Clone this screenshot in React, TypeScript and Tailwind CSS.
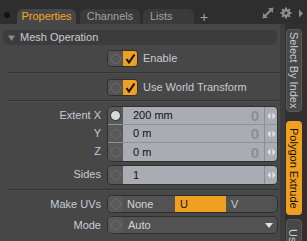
import React from "react";

const font = { fontFamily: '"Liberation Sans", Arial, sans-serif' };

function Circle({ filled }: { filled?: boolean }) {
  return (
    <div className="w-[15px] h-full flex items-center justify-center bg-[#595959]">
      <div
        className={
          filled
            ? "w-[11px] h-[11px] rounded-full bg-[#d6d8db] border border-[#2e2e2e]"
            : "w-[10px] h-[10px] rounded-full border border-[#6c6c6c]"
        }
      />
    </div>
  );
}

function Arrows() {
  return (
    <div className="w-[13px] h-full flex items-center justify-center border-l border-[#8a8e94]">
      <svg width="9" height="8" viewBox="0 0 9 8">
        <path d="M3.5 0.5 L0.5 4 L3.5 7.5 Z" fill="#e4e6e8" />
        <path d="M5.5 0.5 L8.5 4 L5.5 7.5 Z" fill="#e4e6e8" />
      </svg>
    </div>
  );
}

function Check() {
  return (
    <svg width="11" height="11" viewBox="0 0 11 11">
      <path d="M1.5 6 L4 9.5 L9.5 1.5" stroke="#111" strokeWidth="2" fill="none" />
    </svg>
  );
}

function Label({ children }: { children: React.ReactNode }) {
  return (
    <div className="w-[102px] pr-[1px] text-right text-[11px] text-[#c6ccd3] leading-none shrink-0">
      {children}
    </div>
  );
}

function Separator() {
  return (
    <div className="ml-[7px] mr-[1px] flex flex-col">
      <div className="h-px bg-[#333333]" />
      <div className="h-px bg-[#4f4f4f]" />
    </div>
  );
}

function ToggleRow({ text }: { text: string }) {
  return (
    <div className="flex items-center h-[17px]">
      <div className="w-[107px] shrink-0" />
      <div className="flex h-[17px] w-[31px] rounded-[4px] overflow-hidden border border-[#2f2f2f]">
        <div className="w-[15px] flex items-center justify-center bg-[#555555]">
          <div className="w-[10px] h-[10px] rounded-full border border-[#6c6c6c]" />
        </div>
        <div className="flex-1 flex items-center justify-center bg-[#f0a020]">
          <Check />
        </div>
      </div>
      <div className="ml-[5px] text-[11px] text-[#c6ccd3]">{text}</div>
    </div>
  );
}

function ValueRow({ value, filled, ghost, last }: { value: string; filled?: boolean; ghost?: boolean; last?: boolean }) {
  return (
    <div className={"flex h-[18px] items-stretch" + (last ? "" : " border-b border-[#8f9399]")}>
      <Circle filled={filled} />
      <div className="flex-1 flex items-center bg-[#a9adb3] pl-[10px] text-[11px] text-[#111111]">
        <span className="flex-1">{value}</span>
        {ghost && (
          <span className="mr-[5px] text-[15px] font-bold text-[#8b8f95] leading-none">0</span>
        )}
      </div>
      <div className="bg-[#a9adb3]">
        <Arrows />
      </div>
    </div>
  );
}

export default function App() {
  return (
    <div className="w-[307px] h-[241px] bg-[#2e2e2e] flex flex-col overflow-hidden" style={font}>
      {/* Top tab strip */}
      <div className="h-[24px] flex items-end relative">
        <div className="absolute left-[4px] top-[12px] w-[6px] h-[6px] rounded-full bg-[#121212]" />
        <div className="ml-[17px] w-[59px] h-[15px] rounded-t-[6px] bg-[#474747] text-[#f5a623] text-[11px] flex items-center justify-center">
          Properties
        </div>
        <div className="ml-[4px] w-[60px] h-[15px] rounded-t-[6px] bg-[#3a3a3a] text-[#9ea4aa] text-[11px] flex items-center justify-center">
          Channels
        </div>
        <div className="ml-[3px] w-[51px] h-[15px] rounded-t-[6px] bg-[#3a3a3a] text-[#9ea4aa] text-[11px] flex items-center pl-[7px]">
          Lists
        </div>
        <div className="ml-[6px] h-[15px] text-[#9ea4aa] text-[14px] leading-none flex items-center">+</div>
        <div className="flex-1" />
        <div className="h-[24px] flex items-center gap-[6px] pr-[3px] pt-[2px]">
          <svg width="12" height="12" viewBox="0 0 12 12">
            <path d="M1 11 L11 1" stroke="#8c8c8c" strokeWidth="2" />
            <path d="M1 11 L1 6 L6 11 Z" fill="#8c8c8c" />
            <path d="M11 1 L6 1 L11 6 Z" fill="#8c8c8c" />
          </svg>
          <svg width="12" height="12" viewBox="0 0 12 12">
            <circle cx="6" cy="6" r="4" fill="#8c8c8c" />
            <path
              d="M6 0.5 V11.5 M0.5 6 H11.5 M2.1 2.1 L9.9 9.9 M9.9 2.1 L2.1 9.9"
              stroke="#8c8c8c"
              strokeWidth="2"
            />
            <circle cx="6" cy="6" r="1.6" fill="#2e2e2e" />
          </svg>
          <svg width="6" height="9" viewBox="0 0 6 9">
            <path d="M1 0.5 L5 4.5 L1 8.5 Z" fill="#8c8c8c" />
          </svg>
        </div>
      </div>

      {/* Body */}
      <div className="flex-1 flex">
        <div className="w-[280px] bg-[#474747] flex flex-col">
          {/* Section header */}
          <div className="mt-[6px] mx-[3px] h-[15px] rounded-[5px] bg-[#3c3c3c] flex items-center">
            <svg width="7" height="6" viewBox="0 0 7 6" className="ml-[5px]">
              <path d="M0 0.5 H7 L3.5 6 Z" fill="#8a8a8a" />
            </svg>
            <span className="ml-[5px] text-[11px] text-[#c6ccd3]">Mesh Operation</span>
          </div>

          <div className="mt-[5px]">
            <ToggleRow text="Enable" />
          </div>
          <div className="mt-[5px]">
            <Separator />
          </div>
          <div className="mt-[5px]">
            <ToggleRow text="Use World Transform" />
          </div>
          <div className="mt-[4px]">
            <Separator />
          </div>

          {/* Extent group */}
          <div className="mt-[4px] flex">
            <div className="flex flex-col">
              <div className="h-[18px] flex items-center"><Label>Extent X</Label></div>
              <div className="h-[18px] flex items-center"><Label>Y</Label></div>
              <div className="h-[18px] flex items-center"><Label>Z</Label></div>
            </div>
            <div className="ml-[5px] w-[171px] rounded-[5px] overflow-hidden border border-[#2f2f2f] flex flex-col">
              <ValueRow value="200 mm" filled ghost />
              <ValueRow value="0 m" ghost />
              <ValueRow value="0 m" ghost last />
            </div>
          </div>

          {/* Sides */}
          <div className="mt-[3px] flex">
            <div className="h-[18px] flex items-center"><Label>Sides</Label></div>
            <div className="ml-[5px] w-[171px] rounded-[5px] overflow-hidden border border-[#2f2f2f] flex flex-col">
              <ValueRow value="1" last />
            </div>
          </div>

          <div className="mt-[4px]">
            <Separator />
          </div>

          {/* Make UVs */}
          <div className="mt-[4px] flex items-center">
            <Label>Make UVs</Label>
            <div className="ml-[5px] w-[171px] h-[18px] rounded-[5px] overflow-hidden border border-[#2f2f2f] flex bg-[#525252] text-[11px]">
              <Circle />
              <div className="w-[52px] flex items-center pl-[4px] text-[#d4d8dc]">None</div>
              <div className="w-[51px] flex items-center pl-[5px] bg-[#f0a020] text-[#111111]">U</div>
              <div className="flex-1 flex items-center pl-[5px] text-[#c6ccd3]">V</div>
            </div>
          </div>

          {/* Mode */}
          <div className="mt-[3px] flex items-center">
            <Label>Mode</Label>
            <div className="ml-[5px] w-[171px] h-[18px] rounded-[5px] overflow-hidden border border-[#2f2f2f] flex bg-[#525252] text-[11px]">
              <Circle />
              <div className="flex-1 flex items-center pl-[5px] text-[#d4d8dc]">Auto</div>
              <div className="w-[16px] flex items-center justify-center">
                <svg width="8" height="5" viewBox="0 0 8 5">
                  <path d="M0 0 H8 L4 5 Z" fill="#e0e2e4" />
                </svg>
              </div>
            </div>
          </div>
        </div>

        {/* Right vertical tabs */}
        <div className="flex-1 flex">
          <div className="w-[5px] bg-[#3d3d3d]" />
          <div className="flex-1 flex flex-col pt-[5px] pl-[1px] bg-[#303030]">
            <div className="w-[16px] h-[83px] rounded-[4px] bg-[#474747] border border-[#5a5a5a] flex items-center justify-center text-[11px] text-[#c6ccd3] [writing-mode:vertical-rl]">
              Select By Index
            </div>
            <div className="mt-[9px] w-[16px] h-[94px] rounded-[4px] bg-[#f0a020] flex items-center justify-center text-[11px] text-[#111111] [writing-mode:vertical-rl]">
              Polygon Extrude
            </div>
            <div className="mt-[4px] w-[16px] h-[40px] rounded-[4px] bg-[#474747] border border-[#5a5a5a] flex items-start justify-center pt-[3px] text-[11px] text-[#c6ccd3] [writing-mode:vertical-rl]">
              User
            </div>
          </div>
        </div>
      </div>
    </div>
  );
}
